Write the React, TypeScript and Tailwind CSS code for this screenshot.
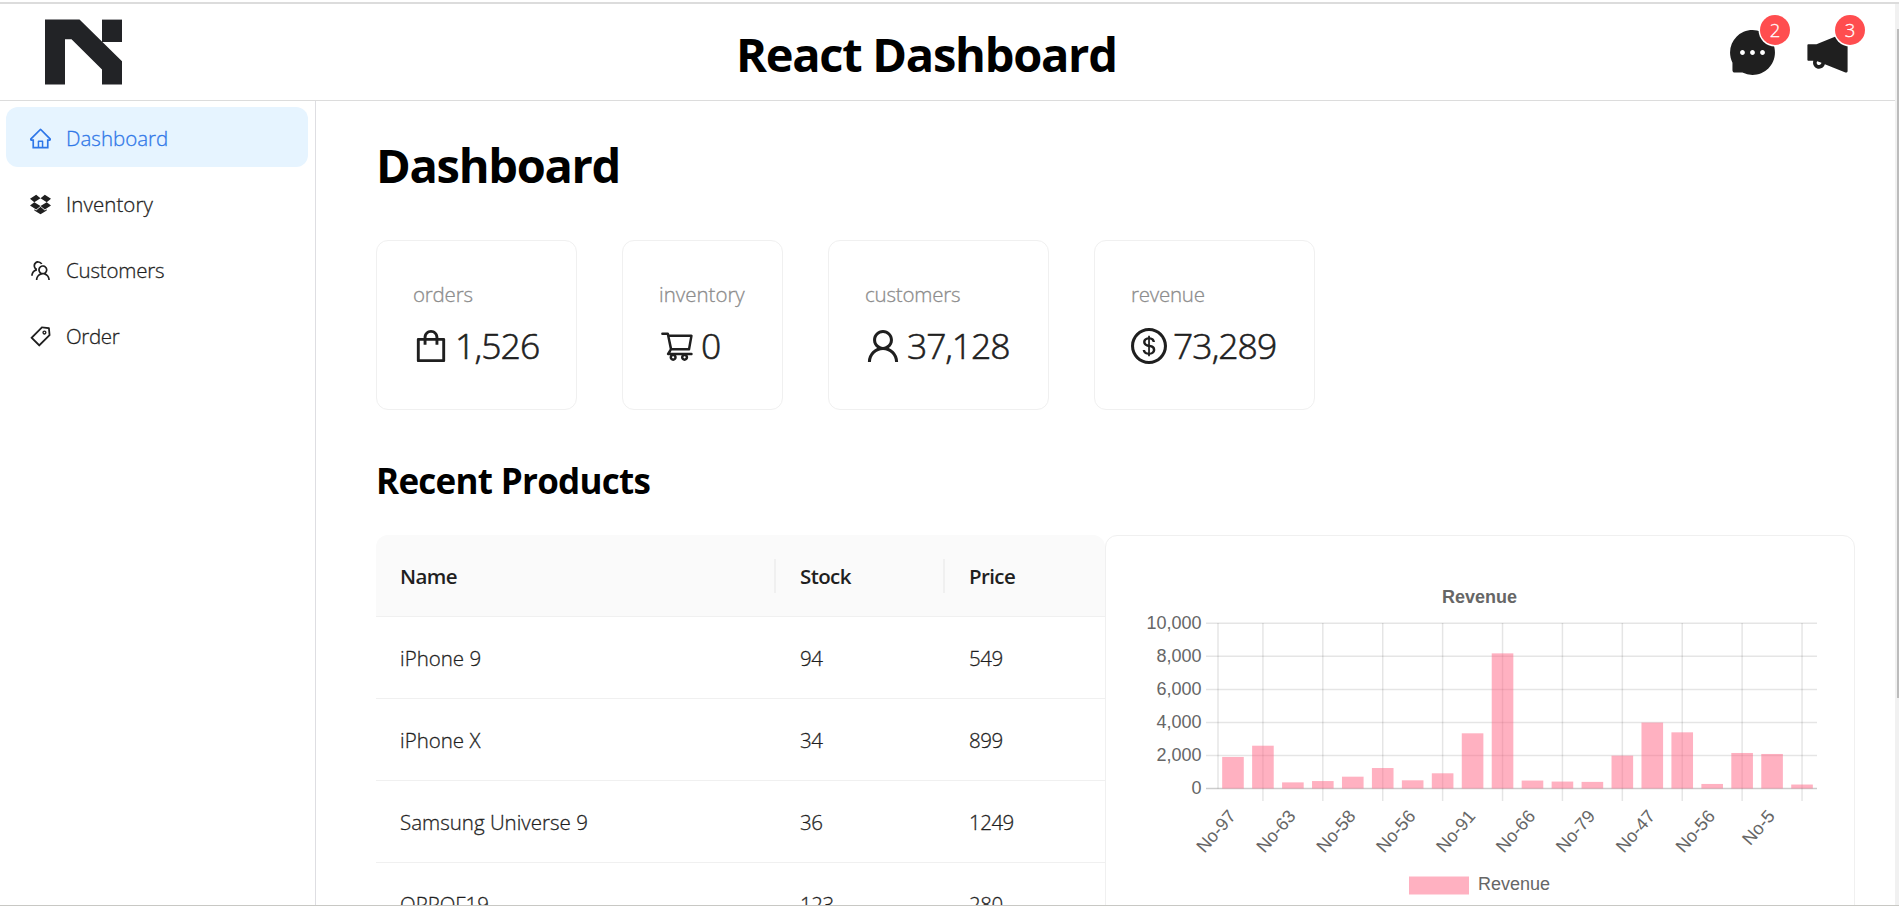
import React from "react";
import {
  AiFillMessage,
  AiFillNotification,
  AiOutlineDollarCircle,
  AiOutlineDropbox,
  AiOutlineHome,
  AiOutlineShopping,
  AiOutlineShoppingCart,
  AiOutlineTag,
  AiOutlineTeam,
  AiOutlineUser,
} from "react-icons/ai";
import type { IconType } from "react-icons";

// Crops the 1024 canvas of the icons to the drawn area.
const ICON_BOX = "64 64 896 896";
const FULL_BOX = "0 0 1024 1024";

const menu: { label: string; icon: IconType; active?: boolean; tracking: string }[] = [
  { label: "Dashboard", icon: AiOutlineHome, active: true, tracking: "tracking-normal" },
  { label: "Inventory", icon: AiOutlineDropbox, tracking: "tracking-[0.07px]" },
  { label: "Customers", icon: AiOutlineTeam, tracking: "tracking-[-0.2px]" },
  { label: "Order", icon: AiOutlineTag, tracking: "tracking-[-0.35px]" },
];

const stats: { title: string; value: string; icon: IconType; box: string; width: string; titleTracking: string; valueTracking: string }[] = [
  { title: "orders", value: "1,526", icon: AiOutlineShopping, box: ICON_BOX, width: "w-[201px]", titleTracking: "tracking-[-0.2px]", valueTracking: "tracking-[-0.85px]" },
  { title: "inventory", value: "0", icon: AiOutlineShoppingCart, box: FULL_BOX, width: "w-[161px]", titleTracking: "tracking-normal", valueTracking: "tracking-normal" },
  { title: "customers", value: "37,128", icon: AiOutlineUser, box: ICON_BOX, width: "w-[221px]", titleTracking: "tracking-[-0.2px]", valueTracking: "tracking-[-1.1px]" },
  { title: "revenue", value: "73,289", icon: AiOutlineDollarCircle, box: ICON_BOX, width: "w-[221px]", titleTracking: "tracking-[-0.23px]", valueTracking: "tracking-[-0.95px]" },
];

const products = [
  { name: "iPhone 9", stock: 94, price: 549 },
  { name: "iPhone X", stock: 34, price: 899 },
  { name: "Samsung Universe 9", stock: 36, price: 1249 },
  { name: "OPPOF19", stock: 123, price: 280 },
];

const revenue = [
  1910, 2590, 370, 450, 715, 1240, 495, 920, 3340, 8180, 480, 420, 400, 1990, 3990, 3400, 275, 2150, 2090, 240,
];
const labels = ["No-97", "No-63", "No-58", "No-56", "No-91", "No-66", "No-79", "No-47", "No-56", "No-5"];

function Logo() {
  return (
    <svg width="77" height="66" viewBox="0 0 77 66" fill="#222326">
      <path d="M0 0.6H34.5L77 42.3V65.6H57V50.6L26.5 20.3H20V65.6H0Z" />
      <path d="M57 0.6H77V23H57Z" />
    </svg>
  );
}

function BadgeIcon({ icon: Icon, count }: { icon: IconType; count: number }) {
  return (
    <div className="relative size-[45px]">
      <Icon size={45} viewBox={ICON_BOX} className="text-[#1f1f1f]" />
      <span className="absolute -top-[15px] -right-[15px] flex size-[30px] items-center justify-center rounded-full bg-[#ff4d4f] pt-px text-[18.5px] leading-none font-light text-white shadow-[0_0_0_1.5px_#fff] [-webkit-text-stroke:0.3px]">
        {count}
      </span>
    </div>
  );
}

function Header() {
  return (
    <header className="flex h-[97px] shrink-0 items-center border-b border-[#dcdcdc]">
      <div className="w-[740px] pl-[45px]">
        <Logo />
      </div>
      <h1 className="-ml-1 flex-1 pt-[3px] text-[47px] leading-[72px] font-bold tracking-[-1.27px] text-black">
        React Dashboard
      </h1>
      <div className="flex gap-[30px] pr-[45px]">
        <BadgeIcon icon={AiFillMessage} count={2} />
        <BadgeIcon icon={AiFillNotification} count={3} />
      </div>
    </header>
  );
}

function Sidebar() {
  return (
    <nav className="flex w-[316px] shrink-0 flex-col gap-1.5 border-r border-[#dedee2] py-1.5 pr-[7px] pl-1.5">
      {menu.map(({ label, icon: Icon, active, tracking }) => (
        <a
          key={label}
          className={`flex h-[60px] shrink-0 items-center gap-[15px] rounded-xl pt-0.5 pl-6 text-[20.5px] font-light [-webkit-text-stroke:0.3px] ${tracking} ${
            active ? "bg-[#e6f4ff] text-[#2f77e8]" : "text-[#1f1f1f]"
          }`}
        >
          <Icon size={21} viewBox={ICON_BOX} strokeWidth={0} />
          {label}
        </a>
      ))}
    </nav>
  );
}

function StatCards() {
  return (
    <div className="mt-[39px] flex gap-[45px]">
      {stats.map(({ title, value, icon: Icon, box, width, titleTracking, valueTracking }) => (
        <div
          key={title}
          className={`h-[170px] rounded-xl border-[1.5px] border-[#f0f0f0] px-9 pt-[37px] font-light [-webkit-text-stroke:0.3px] ${width}`}
        >
          <div className={`mb-[7px] text-[20.5px] leading-[33px] text-[#8c8c8c] ${titleTracking}`}>{title}</div>
          <div className="flex h-[54px] items-center gap-1.5 text-[#1f1f1f]">
            <Icon size={36} viewBox={box} className="mt-0.5 shrink-0" />
            <span className={`text-[35.5px] leading-[54px] [-webkit-text-stroke:0.6px] ${valueTracking}`}>{value}</span>
          </div>
        </div>
      ))}
    </div>
  );
}

function ProductTable() {
  return (
    <div className="w-[729px] shrink-0 text-[20.5px] text-[#1f1f1f]">
      <div className="flex h-[82px] items-center rounded-t-xl border-b border-[#f0f0f0] bg-[#fafafa] font-semibold tracking-[-0.6px]">
        <div className="flex h-[34px] w-[400px] items-center border-r-2 border-[#f0f0f0] pt-0.5 pl-6">Name</div>
        <div className="flex h-[34px] w-[169px] items-center border-r-2 border-[#f0f0f0] pt-0.5 pl-6">Stock</div>
        <div className="pt-0.5 pl-6">Price</div>
      </div>
      {products.map((p) => (
        <div
          key={p.name}
          className="flex h-[82px] items-center border-b border-[#f0f0f0] pt-0.5 font-light [-webkit-text-stroke:0.3px]"
        >
          <div className="w-[400px] pl-6">{p.name}</div>
          <div className="w-[169px] pl-6 tracking-[-0.5px]">{p.stock}</div>
          <div className="pl-6 tracking-[-0.5px]">{p.price}</div>
        </div>
      ))}
    </div>
  );
}

function RevenueChart() {
  const left = 76;
  const base = 216.5;
  const step = 29.95;
  const unit = 16.52 / 1000;
  const ticks = [0, 2000, 4000, 6000, 8000, 10000];
  return (
    <svg
      width="676"
      height="334"
      viewBox="0 0 676 334"
      className="block overflow-visible font-['Liberation_Sans',Arial,sans-serif] text-[18px]"
      fill="#666"
    >
      <text x="337.5" y="31" textAnchor="middle" className="font-bold">
        Revenue
      </text>
      {ticks.map((t) => (
        <g key={t}>
          <path d={`M64 ${base - t * unit}H675`} stroke={t === 0 ? "rgba(0,0,0,0.2)" : "rgba(0,0,0,0.1)"} strokeWidth="1.5" />
          <text x="59.5" y={base - t * unit + 5.5} textAnchor="end">
            {t.toLocaleString("en-US")}
          </text>
        </g>
      ))}
      <path d={`M${left} 51V${base}`} stroke="rgba(0,0,0,0.1)" strokeWidth="1.5" />
      {labels.map((_, i) => (
        <path key={i} d={`M${left + step * (2 * i + 1.5)} 51V229`} stroke="rgba(0,0,0,0.1)" strokeWidth="1.5" />
      ))}
      {revenue.map((v, i) => (
        <rect
          key={i}
          x={left + step * (i + 0.5) - 10.8}
          y={base - v * unit}
          width="21.6"
          height={v * unit}
          fill="rgba(255,99,132,0.5)"
        />
      ))}
      {labels.map((l, i) => (
        <text
          key={i}
          transform={`translate(${left + step * (2 * i + 0.5)} 241.5) rotate(-49)`}
          textAnchor="end"
          dy="5"
        >
          {l}
        </text>
      ))}
      <rect x="267" y="304.5" width="60" height="18" fill="#ffb1c1" />
      <text x="336" y="318">
        Revenue
      </text>
    </svg>
  );
}

export default function App() {
  return (
    <div className="flex h-[906px] w-[1899px] flex-col overflow-hidden bg-white pt-0.5 font-['Open_Sans','Noto_Sans',sans-serif]">
      <div className="h-0.5 shrink-0 bg-[#dcdcdc]" />
      <div className="flex min-h-0 flex-1">
        <div className="flex min-w-0 flex-1 flex-col">
          <Header />
          <div className="flex min-h-0 flex-1">
            <Sidebar />
            <main className="min-w-0 flex-1 overflow-hidden pt-7 pl-[60px]">
              <h2 className="text-[47px] leading-[72px] font-bold tracking-[-1.3px] text-black">Dashboard</h2>
              <StatCards />
              <h3 className="mt-[44px] text-[35px] leading-[54px] font-bold tracking-[-0.72px] text-black">
                Recent Products
              </h3>
              <div className="mt-[27px] flex">
                <ProductTable />
                <div className="h-[460px] w-[750px] rounded-xl border-[1.5px] border-[#f0f0f0] p-9">
                  <RevenueChart />
                </div>
              </div>
            </main>
          </div>
        </div>
        <div className="flex w-1 shrink-0 justify-end bg-[#f1f1f1] pt-[25px]">
          <div className="h-[669px] w-0.5 bg-[#bcbcbc]" />
        </div>
      </div>
      <div className="h-px shrink-0 bg-[#c8c8c4]" />
    </div>
  );
}
